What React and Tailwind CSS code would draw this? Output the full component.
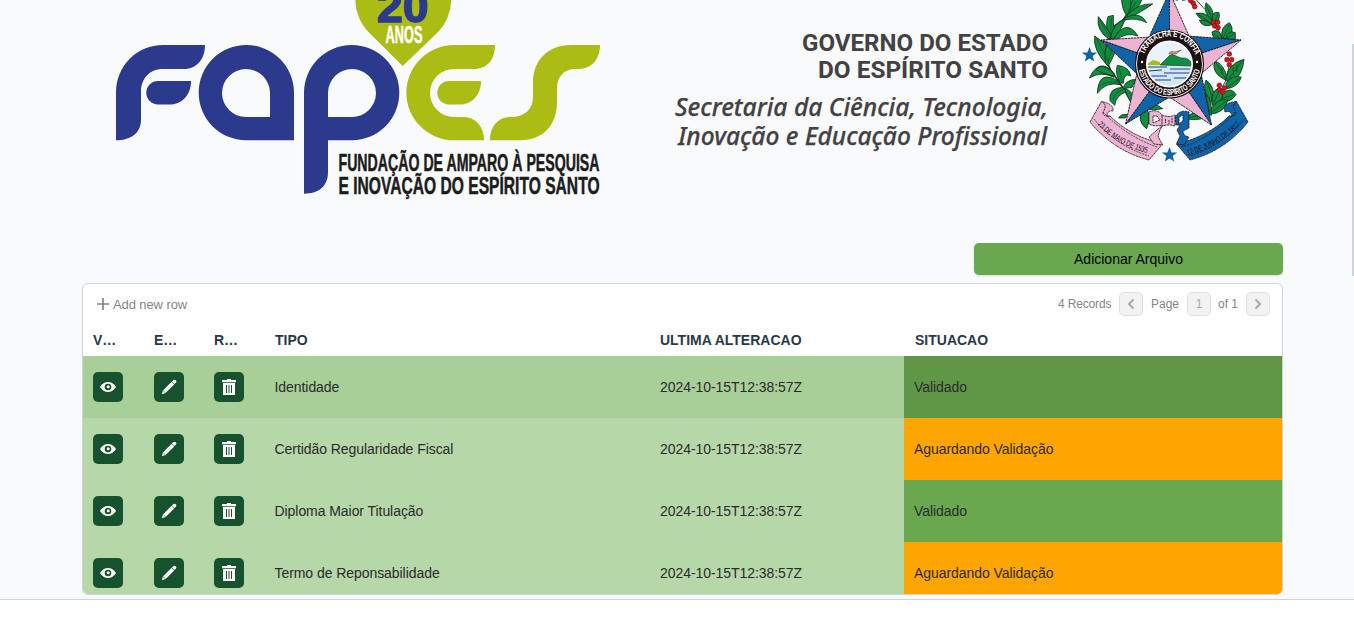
import React from "react";

const BLUE = "#0f64a8";
const PINK = "#eab4d2";
const LEAF = "#128c3f";
const INK = "#1d1013";

function FapesLogo() {
  return (
    <svg className="h-[243px] w-[540px] shrink-0" viewBox="82 0 540 243">
      <g fill="#2b3a8c" fillRule="evenodd">
        <path d="M116 140.300V92A47 47 0 0 1 163 45H205C205 59 197 69 184 69H163C149 69 141 79 141 92V120C141 132 132 140.300 116 140.300Z" />
        <path d="M158 81H191C191 95 182 104.500 170 104.500H158A11.750 11.750 0 0 1 158 81Z" />
        <path d="M294 140.300H246A47.650 47.650 0 1 1 294 92.600ZM270 117V92.600A24 24 0 1 0 246 117Z" />
        <path d="M304 193.700V92.600A47.650 47.650 0 1 1 352 140.300H328V172C328 186 319 193.700 304 193.700ZM328 117H352A24 24 0 1 0 328 92.600Z" />
      </g>
      <g fill="#abbd14">
        <path d="M454 45H495C495 60 487 69 474 69H454A24 24 0 0 0 454 117H463C476 117 484 127 484 140.300H454A47.650 47.650 0 0 1 454 45Z" />
        <path d="M449 81H481C481 95 472 104.500 460 104.500H449A11.750 11.750 0 0 1 449 81Z" />
        <path d="M571 45H600C600 59 592 69 578 69H575C564 69 557 77 557 88V102C557 125 543 140.300 520 140.300H490C490 126 498 117 511 117C525 117 533 109 533 97V83C533 60 548 45 571 45Z" />
        <path d="M402.700 66L369.500 33A48 48 0 1 1 437 33Z" />
      </g>
      <g fontWeight="700" fontFamily="'Liberation Sans',sans-serif">
        <text transform="translate(377 21.500) scale(0.95 1)" fontSize="44" fill="#2b3a8c" stroke="#2b3a8c" strokeWidth="1.500" textLength="54" lengthAdjust="spacingAndGlyphs">20</text>
        <text transform="translate(385.500 42.800) scale(0.56 1)" fontSize="23" fill="#fff" stroke="#fff" strokeWidth="0.500" textLength="66" lengthAdjust="spacingAndGlyphs">ANOS</text>
        <g fill="#1c1c1b" stroke="#1c1c1b" strokeWidth="0.500" fontSize="23">
          <text transform="translate(338.500 170.500) scale(0.62 1)" textLength="421" lengthAdjust="spacingAndGlyphs">FUNDAÇÃO DE AMPARO À PESQUISA</text>
          <text transform="translate(338.500 193.700) scale(0.62 1)" textLength="421" lengthAdjust="spacingAndGlyphs">E INOVAÇÃO DO ESPÍRITO SANTO</text>
        </g>
      </g>
    </svg>
  );
}

function GovernmentTitle() {
  return (
    <svg className="h-[243px] w-[440px] shrink-0" viewBox="622 0 440 243" fill="#434143">
      <g fontSize="24.500" fontWeight="700" fontFamily="Roboto,sans-serif">
        <text x="802" y="51" textLength="246" lengthAdjust="spacingAndGlyphs">GOVERNO DO ESTADO</text>
        <text x="818" y="77.500" textLength="230" lengthAdjust="spacingAndGlyphs">DO ESPÍRITO SANTO</text>
      </g>
      <g fontSize="24.500" fontWeight="500" fontStyle="italic" stroke="#434143" strokeWidth="0.250" fontFamily="'Noto Sans','Open Sans',sans-serif">
        <text x="675" y="116" textLength="373" lengthAdjust="spacingAndGlyphs">Secretaria da Ciência, Tecnologia,</text>
        <text x="678" y="145" textLength="369" lengthAdjust="spacingAndGlyphs">Inovação e Educação Profissional</text>
      </g>
    </svg>
  );
}

const caneLeaves = [
  "M122 60Q150 20 152 -12L182 -8Q170 35 122 60Z",
  "M118 -8Q120 30 134 46Q152 22 146 -10Z",
  "M128 54Q165 8 212 12Q180 35 128 60Z",
  "M128 54Q175 30 194 68Q165 52 128 60Z",
  "M78 116Q70 70 78 50L94 46Q96 85 92 116Z",
  "M82 118Q42 92 49 50Q74 78 90 112Z",
  "M86 114Q92 68 130 58Q118 90 94 118Z",
  "M94 118Q132 52 168 108Q130 94 98 124Z",
  "M76 196Q32 150 38 108Q72 130 88 164Z",
  "M70 186Q64 140 84 122L104 132Q98 170 78 198Z",
  "M98 222Q54 168 22 234Q56 212 96 232Z",
  "M88 212Q58 190 42 208Q60 222 98 228Z",
  "M112 246Q50 204 46 280Q72 244 114 254Z",
  "M114 248Q98 218 106 196Q142 200 146 228Q126 216 124 250Z",
  "M128 262Q78 262 84 302L98 316Q102 286 132 276Z",
  "M124 266Q128 240 162 238L150 262Z",
  "M128 266Q158 272 154 310Q138 300 128 266Z",
  "M110 354Q118 340 136 344L130 354Z",
  "M182 318Q162 366 194 386Q210 350 192 322Z",
  "M182 322Q210 300 242 326L214 330Z",
];

const coffeeLeaves = [
  "M130 74Q90 62 78 40Q112 34 132 68Z",
  "M126 62Q98 36 108 8Q134 26 130 62Z",
  "M128 64Q122 32 147 38Q152 56 136 74Z",
  "M128 74Q96 84 88 60Q108 58 128 74Z",
  "M152 118Q128 122 126 96Q146 82 156 114Z",
  "M156 116Q150 80 178 68Q200 94 166 118Z",
  "M166 118Q176 88 196 98V118Z",
  "M166 240Q122 218 134 182Q164 194 172 236Z",
  "M168 242Q170 192 222 178Q218 232 178 248Z",
  "M168 250Q190 222 214 232Q202 264 168 266Z",
  "M150 282Q186 258 198 284Q180 312 148 302Z",
  "M124 306Q94 270 108 240Q134 258 134 304Z",
  "M126 314Q120 274 150 262Q172 290 134 322Z",
  "M122 328Q146 292 174 300Q162 342 118 342Z",
  "M112 342Q94 300 104 278Q128 300 124 346Z",
  "M50 356Q70 322 106 352Q78 364 50 356Z",
];

const coffeeVeins =
  "M84 43L128 72M110 16L128 62M144 42L132 70M130 102L152 116M178 74L160 114M192 102L170 116M138 188L168 238M216 184L172 242M190 202V226M200 194V216M156 202V220M208 236L172 262M192 284L152 296M112 246L130 306M148 270L130 314M168 304L124 338M108 286L120 340M62 350L98 350";

const berries = [
  [62, 2], [70, 10], [74, 20], [130, 67], [143, 67], [134, 78], [144, 83],
  [178, 162], [171, 179], [185, 179], [178, 194], [148, 256], [163, 264], [148, 270], [158, 276],
];

function Star({ x, y }) {
  return (
    <path transform={`translate(${x} ${y})`} fill={BLUE} d="M0 -8L2.100 -2.600L7.600 -2.500L3.200 1L4.700 6.500L0 3.400L-4.700 6.500L-3.200 1L-7.600 -2.500L-2.100 -2.600Z" />
  );
}

function CoatOfArms() {
  return (
    <svg className="h-[243px] w-[221px] shrink-0" viewBox="1062 0 221 243">
      <defs>
        <path id="mottoTop" d="M1142.500 63.500A27 27 0 0 1 1196.500 63.500" />
        <path id="mottoBottom" d="M1138.500 64A31 31 0 0 0 1200.500 64" />
        <path id="leftBand" d="M1096 123Q1119 148 1155 155" />
        <path id="rightBand" d="M1185 156Q1221 147 1244 121" />
        <clipPath id="seal"><circle cx="1169.500" cy="64" r="22" /></clipPath>
      </defs>

      <g transform="translate(1082 0) scale(0.3333)" stroke="#12351d" strokeWidth="2.600" strokeLinejoin="round">
        <path d="M126 58L88 84M80 112Q62 190 100 230Q130 270 150 310M86 116V160" fill="none" strokeWidth="5" />
        {caneLeaves.map((d) => <path key={d} d={d} fill={LEAF} />)}
        <path d="M164 4L136 46M88 54L86 110M54 60L84 112M44 116L80 186M92 132L78 190M52 258Q80 238 110 250M94 300Q96 276 126 268M112 204L120 244" fill="none" strokeWidth="1.500" />
      </g>
      <g transform="translate(1170 0) scale(0.3333)" stroke="#12351d" strokeWidth="2.600" strokeLinejoin="round">
        <path d="M76 -4L104 28M132 70L160 116M178 194L168 240L120 340" fill="none" />
        {coffeeLeaves.map((d) => <path key={d} d={d} fill={LEAF} />)}
        <path d={coffeeVeins} fill="none" strokeWidth="2" />
        {berries.map(([x, y], i) => <circle key={i} cx={x} cy={y} r="7" fill="#d3191d" stroke="#6c1014" strokeWidth="2" />)}
      </g>

      <path d="M1175 -1L1178 0M1182 0L1187 -1" stroke={BLUE} strokeWidth="2" />
      <g stroke={INK} strokeWidth="0.900" strokeLinejoin="round" strokeDasharray="2.500 0.600">
        <path d="M1169.500 64V-8L1150 35Z" fill={BLUE} />
        <path d="M1169.500 64V-8L1189 36Z" fill={PINK} />
        <path d="M1169.500 64L1241 40L1188 36Z" fill={BLUE} />
        <path d="M1169.500 64L1241 40L1202 73Z" fill={PINK} />
        <path d="M1169.500 64L1211.500 125L1201 73Z" fill={BLUE} />
        <path d="M1169.500 64L1211.500 125L1169.500 97Z" fill={PINK} />
        <path d="M1169.500 64L1125.500 124L1169.500 97Z" fill={BLUE} />
        <path d="M1169.500 64L1125.500 124L1137 73Z" fill={PINK} />
        <path d="M1169.500 64L1101 40L1137 74Z" fill={BLUE} />
        <path d="M1169.500 64L1101 40L1151 37Z" fill={PINK} />
      </g>

      <circle cx="1169.500" cy="64" r="34" fill="#fff" stroke={INK} strokeWidth="1.200" />
      <circle cx="1169.500" cy="64" r="28" fill="none" stroke={INK} strokeWidth="9" />
      <circle cx="1169.500" cy="64" r="22.500" fill="#eaf3fb" />
      <g clipPath="url(#seal)">
        <path d="M1147 65H1192V87H1147Z" fill="#d2e8f4" />
        <path d="M1147 64L1153 60L1160 62V65H1147Z" fill="#abbd14" />
        <path d="M1160 65L1169 56Q1172 53 1176 56L1181 58Q1189 57 1192 64V66Z" fill={LEAF} stroke="#12351d" strokeWidth="0.600" />
        <path d="M1169 54Q1170 50 1175 52L1181 50L1176 54Z" fill="#e8976e" stroke={INK} strokeWidth="0.400" />
        <path d="M1147 67H1167M1148 71L1162 70M1164 73H1190M1149 76H1167M1174 78H1188M1155 80H1171M1170 69H1190" stroke="#293c83" strokeWidth="1" />
      </g>
      <circle cx="1169.500" cy="64" r="22.500" fill="none" stroke="#fff" strokeWidth="0.900" />
      <g fill="#fff" fontSize="9" fontWeight="700" fontFamily="'Liberation Sans',sans-serif">
        <text textLength="67" lengthAdjust="spacingAndGlyphs"><textPath href="#mottoTop" startOffset="9">TRABALHA E CONFIA</textPath></text>
        <text fontSize="8.500" textLength="85" lengthAdjust="spacingAndGlyphs"><textPath href="#mottoBottom" startOffset="6">ESTADO DO ESPÍRITO SANTO</textPath></text>
      </g>
      <circle cx="1142" cy="62" r="1.200" fill="#fff" />
      <circle cx="1197" cy="62" r="1.200" fill="#fff" />

      <g stroke={INK} strokeWidth="0.800" strokeLinejoin="round" strokeDasharray="2.500 0.500">
        <path d="M1101.500 101.500L1090 122Q1114 151 1149 160L1162.500 144Q1130 136 1110 116L1107 116Q1107 110 1113 111Q1114 104 1101.500 101.500Z" fill={PINK} />
        <path d="M1101.500 101.500Q1108 105 1103 112Q1103 117 1110 116" fill="none" />
        <path d="M1236.500 101.500L1248 122Q1225 151 1190 160L1176.500 144Q1209 136 1229 116L1232 116Q1231 110 1225 112Q1221 103 1236.500 101.500Z" fill={BLUE} />
        <path d="M1236.500 101.500Q1231 106 1236 112Q1235 117 1229 116" fill="none" />
        <path fillRule="evenodd" d="M1163 117Q1159 108 1149 112V124Q1155 127 1163 125L1157 130L1149 137L1154 144L1162.500 145L1158 136L1160 130L1163 125ZM1153 116H1157L1160 120L1153 123Z" fill={PINK} />
        <path fillRule="evenodd" d="M1175 117Q1180 109 1189 112V128L1183 131Q1183 136 1189 137L1184 145L1176.500 144L1180 136L1177 130L1180 125L1176 125ZM1179 117L1183 115V121L1179 124Z" fill={BLUE} />
        <path d="M1162 115Q1169 118 1175 115V126Q1169 124 1162 126Z" fill={PINK} />
        <path d="M1165.500 119V123M1169 120V124M1172 118V123" />
      </g>
      <g fill="none" stroke={INK} strokeWidth="0.700" strokeDasharray="2 1">
        <path d="M1094 119Q1116 146 1149 156M1103 112Q1126 136 1157 147" />
        <path d="M1244 119Q1222 146 1190 156M1235 112Q1213 138 1181 147" />
      </g>
      <g fill={INK} fontSize="8" fontFamily="'Liberation Sans',sans-serif">
        <text textLength="58" lengthAdjust="spacingAndGlyphs"><textPath href="#leftBand" startOffset="2">23 DE MAIO DE 1535</textPath></text>
        <text textLength="61" lengthAdjust="spacingAndGlyphs"><textPath href="#rightBand" startOffset="3">12 DE JUNHO DE 1817</textPath></text>
      </g>
      <Star x={1089.5} y={55} />
      <Star x={1169.500} y={155} />
    </svg>
  );
}

function EyeIcon() {
  return (
    <svg viewBox="0 0 16 16" className="h-4 w-4">
      <path d="M0 8Q3.200 3 8 3T16 8Q12.800 13 8 13T0 8Z" fill="#fff" />
      <circle cx="8" cy="8" r="3.300" fill="#17522e" />
      <circle cx="8.200" cy="7.800" r="1.500" fill="#fff" />
    </svg>
  );
}

function PencilIcon() {
  return (
    <svg viewBox="0 0 16 16" className="h-4 w-4" fill="#fff">
      <path d="M0.800 15.200L2 11.400L10.600 2.800L13.200 5.400L4.600 14Z" />
      <path d="M10.900 2.500L12.500 1Q13.600 0.200 14.800 1.200T15 3.500L13.500 5.100Z" />
      <path d="M2 11.400L4.600 14" stroke="#17522e" strokeWidth="0.600" />
    </svg>
  );
}

function TrashIcon() {
  return (
    <svg viewBox="0 0 16 16" className="h-4 w-4" fill="#fff" fillRule="evenodd">
      <path d="M1 1H6V0H10V1H15V3.300H1ZM2 4H14V16H2ZM5 6V14H6V6ZM7.500 6V14H8.500V6ZM10 6V14H11V6Z" />
    </svg>
  );
}

function IconCell({ children }) {
  return (
    <div className="pl-2.5">
      <button className="flex h-[30px] w-[30px] items-center justify-center rounded-[5px] bg-[#17522e]">{children}</button>
    </div>
  );
}

const rows = [
  { type: "Identidade", status: "Validado", row: "bg-[#a8cf98]", cell: "bg-[#609746]" },
  { type: "Certidão Regularidade Fiscal", status: "Aguardando Validação", row: "bg-[#b6d7a8]", cell: "bg-[#ffa500]" },
  { type: "Diploma Maior Titulação", status: "Validado", row: "bg-[#b6d7a8]", cell: "bg-[#6aa84f]" },
  { type: "Termo de Reponsabilidade", status: "Aguardando Validação", row: "bg-[#b6d7a8]", cell: "bg-[#ffa500]" },
];

function Chevron({ flip }) {
  return (
    <svg viewBox="0 0 10 12" className={flip ? "h-3 w-2.5 rotate-180" : "h-3 w-2.5"} fill="none" stroke="#a9a9a9" strokeWidth="2">
      <path d="M7.500 1.500L3 6L7.500 10.500" />
    </svg>
  );
}

function FilesTable() {
  return (
    <section className="h-[312px] w-[1201px] overflow-hidden rounded-md border border-[#cbd5e1] bg-white">
      <div className="flex h-10 items-center justify-between pr-3 pl-[13px] text-xs text-[#858585]">
        <button className="flex items-center gap-[3px] pt-px text-[13px] tracking-[-0.1px]">
          <svg viewBox="0 0 14 14" className="h-3.5 w-3.5" stroke="#858585" strokeWidth="1.700"><path d="M1 7H13M7 1V13" /></svg>
          Add new row
        </button>
        <div className="flex items-center">
          <span className="w-[61px] tracking-[-0.15px]">4 Records</span>
          <span className="flex h-6 w-6 items-center justify-center rounded-[5px] border border-[#e0e0e0] bg-[#f2f2f2]"><Chevron /></span>
          <span className="w-11 pl-2">Page</span>
          <span className="flex h-6 w-6 items-center justify-center rounded-[5px] border border-[#e0e0e0] bg-[#f2f2f2] text-[#a9a9a9]">1</span>
          <span className="w-[35px] pl-[7px]">of 1</span>
          <span className="flex h-6 w-6 items-center justify-center rounded-[5px] border border-[#e0e0e0] bg-[#f2f2f2]"><Chevron flip /></span>
        </div>
      </div>
      <div className="grid h-8 grid-cols-[61px_60px_61px_385px_254px_378px] items-center text-sm font-bold text-[#2a3947]">
        <span className="pl-2.5">V…</span>
        <span className="pl-2.5">E…</span>
        <span className="pl-2.5">R…</span>
        <span className="pl-2.5">TIPO</span>
        <span className="pl-2.5">ULTIMA ALTERACAO</span>
        <span className="pl-[11px]">SITUACAO</span>
      </div>
      {rows.map((r, i) => (
        <div key={i} className={`grid h-[62px] grid-cols-[61px_60px_61px_385px_254px_378px] items-center text-sm tracking-[-0.06px] text-[#2b2b2b] ${r.row}`}>
          <IconCell><EyeIcon /></IconCell>
          <IconCell><PencilIcon /></IconCell>
          <IconCell><TrashIcon /></IconCell>
          <span className="pl-[9.5px]">{r.type}</span>
          <span className="pl-2.5">2024-10-15T12:38:57Z</span>
          <span className={`flex h-full items-center pl-2.5 ${r.cell}`}>{r.status}</span>
        </div>
      ))}
    </section>
  );
}

export default function App() {
  return (
    <div className="h-[619px] w-[1354px] overflow-hidden bg-white font-['Liberation_Sans',sans-serif]">
      <div className="flex h-[600px] justify-between border-b border-[#cbd5e1] bg-[#f9fafc]">
        <main className="w-[1283px] pl-[82px]">
          <header className="flex h-[243px]">
            <FapesLogo />
            <GovernmentTitle />
            <CoatOfArms />
          </header>
          <div className="flex h-10 items-start justify-end">
            <button className="h-8 w-[309px] rounded-[5px] bg-[#6aa84f] text-sm text-black shadow-sm">Adicionar Arquivo</button>
          </div>
          <FilesTable />
        </main>
        <div className="w-0.5 pt-[44px]">
          <div className="h-[232px] bg-[#cbd5e1]" />
        </div>
      </div>
    </div>
  );
}
